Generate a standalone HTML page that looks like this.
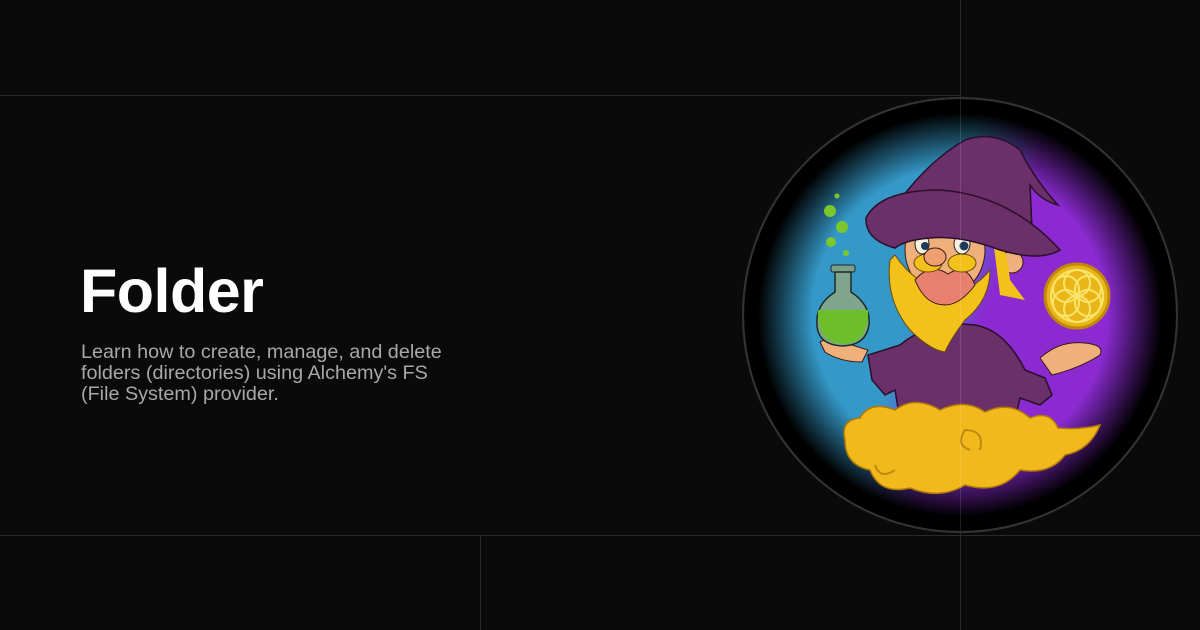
<!DOCTYPE html>
<html><head><meta charset="utf-8"><style>
html,body{margin:0;padding:0;}
body{width:1200px;height:630px;background:#0a0a0a;position:relative;overflow:hidden;font-family:"Liberation Sans",sans-serif;}
.l{position:absolute;background:#2a2a2a;}
h1{position:absolute;left:80px;top:253px;margin:0;font-size:61px;font-weight:bold;color:#fff;letter-spacing:-0.5px;line-height:76px;}
p{position:absolute;left:81px;top:342px;margin:0;font-size:19.8px;line-height:21px;color:#a8a8a8;width:380px;}
</style></head><body>
<div class="l" style="left:0;top:95px;width:960px;height:1px"></div>
<div class="l" style="left:0;top:535px;width:1200px;height:1px"></div>
<div class="l" style="left:480px;top:535px;width:1px;height:95px"></div>
<div class="l" style="left:960px;top:0;width:1px;height:98px"></div>
<div class="l" style="left:960px;top:532px;width:1px;height:98px"></div>
<h1>Folder</h1>
<p>Learn how to create, manage, and delete folders (directories) using Alchemy's FS (File System) provider.</p>
<svg style="position:absolute;left:0;top:0" width="1200" height="630">
<defs>
<radialGradient id="bg" cx="960" cy="315" r="217" gradientUnits="userSpaceOnUse">
<stop offset="0.68" stop-color="#000" stop-opacity="0"/>
<stop offset="0.93" stop-color="#000" stop-opacity="1"/>
</radialGradient>
<linearGradient id="bp" x1="0" y1="0" x2="1" y2="0.35">
<stop offset="0.5" stop-color="#3499c8"/>
<stop offset="0.65" stop-color="#8a2ad0"/>
</linearGradient>
<clipPath id="c"><circle cx="960" cy="315" r="216"/></clipPath>
</defs>
<g clip-path="url(#c)">
<rect x="740" y="95" width="440" height="440" fill="url(#bp)"/>
<rect x="740" y="95" width="440" height="440" fill="url(#bg)"/>
<path d="M900 345 Q930 320 975 325 Q1005 330 1025 370 L1045 378 L1052 395 L1040 405 L1020 398 L1015 420 L900 420 L895 390 L885 395 L872 380 L868 355 Z" fill="#6b2f6a" stroke="#2a0f2a" stroke-width="1.5"/>
<path d="M820 342 Q835 334 852 345 L868 350 L862 362 Q840 362 825 352 Z" fill="#f0b07c" stroke="#3a1a10"/>
<path d="M1040 358 Q1060 340 1085 343 Q1105 345 1100 355 Q1080 368 1052 375 Z" fill="#f0b07c" stroke="#3a1a10"/>
<rect x="831" y="265" width="24" height="7" rx="2" fill="#7aa08a" stroke="#223"/>
<path d="M835 272 L851 272 L851 292 Q871 305 869 325 Q866 345 843 346 Q818 345 817 325 Q815 305 835 292 Z" fill="#7fa58f" stroke="#1f2a22" stroke-width="1.5"/>
<path d="M818 310 L868 310 Q869 343 843 344 Q817 343 818 310 Z" fill="#6cbf2a"/>
<circle cx="837" cy="196" r="2.5" fill="#7cc62e"/><circle cx="830" cy="211" r="6" fill="#7cc62e"/><circle cx="842" cy="227" r="6" fill="#7cc62e"/><circle cx="831" cy="242" r="5" fill="#7cc62e"/><circle cx="846" cy="253" r="3" fill="#7cc62e"/>
<ellipse cx="945" cy="250" rx="40" ry="45" fill="#f0b07c" stroke="#3a1a10"/>
<circle cx="1012" cy="262" r="11" fill="#f0b07c" stroke="#3a1a10"/>
<path d="M990 215 Q1005 235 1010 280 L1025 300 L1000 295 Z" fill="#f2c21b"/>
<path d="M890 260 Q885 300 910 330 Q930 350 945 352 Q950 340 965 320 Q990 300 990 270 Q970 295 945 290 Q915 285 895 255 Z" fill="#f2c21b" stroke="#6a4a08"/>
<path d="M915 280 Q930 262 948 274 Q966 262 975 285 Q960 305 945 305 Q925 305 915 280 Z" fill="#e88070" stroke="#3a1a10"/>
<ellipse cx="928" cy="263" rx="14" ry="9" fill="#f2c21b" stroke="#6a4a08"/>
<ellipse cx="962" cy="263" rx="14" ry="9" fill="#f2c21b" stroke="#6a4a08"/>
<ellipse cx="935" cy="257" rx="11" ry="9" fill="#f0a070" stroke="#3a1a10"/>
<ellipse cx="922" cy="244" rx="7" ry="10" fill="#f8f0e0" stroke="#222"/><circle cx="925" cy="246" r="4" fill="#1e3a5a"/>
<ellipse cx="962" cy="244" rx="8" ry="10" fill="#f8f0e0" stroke="#222"/><circle cx="964" cy="246" r="4.5" fill="#1e3a5a"/>
<path d="M895 225 Q900 205 915 210 L905 240 Z" fill="#f2c21b"/>
<path d="M900 200 Q930 160 965 140 Q995 130 1020 150 Q1035 180 1058 205 Q1040 200 1030 185 L1032 230 L940 210 Z" fill="#6b2f6a" stroke="#2a0f2a" stroke-width="1.5"/>
<path d="M866 218 Q880 190 940 190 Q1010 195 1060 250 Q1040 262 1000 250 Q960 235 930 238 Q905 240 895 248 Q865 240 866 218 Z" fill="#6b2f6a" stroke="#2a0f2a" stroke-width="1.5"/>
<circle cx="1077" cy="296" r="32" fill="#e8b618" stroke="#c08808" stroke-width="3"/>
<g fill="none" stroke="#fbe46a" stroke-width="2">
<circle cx="1077" cy="296" r="26"/>
<circle cx="1077" cy="283" r="13"/><circle cx="1077" cy="309" r="13"/>
<circle cx="1066" cy="289" r="13"/><circle cx="1088" cy="289" r="13"/>
<circle cx="1066" cy="303" r="13"/><circle cx="1088" cy="303" r="13"/>
</g>
<path d="M845 440 Q840 420 860 418 Q870 400 895 410 Q915 395 940 410 Q965 398 985 412 Q1010 400 1030 418 Q1050 410 1058 428 Q1080 430 1100 425 Q1090 450 1065 455 Q1050 475 1020 470 Q1000 495 965 485 Q940 500 910 488 Q880 495 870 470 Q845 465 845 440 Z" fill="#f2b91c" stroke="#b07a08" stroke-width="1.5"/>
<path d="M895 470 Q880 480 875 465 M970 450 Q955 445 965 430 Q985 430 980 450" fill="none" stroke="#c08a10" stroke-width="2"/>
<rect x="960" y="95" width="1" height="440" fill="#fff" opacity="0.12"/>
</g>
<circle cx="960" cy="315" r="217" fill="none" stroke="#333" stroke-width="2"/>
</svg>
</body></html>
